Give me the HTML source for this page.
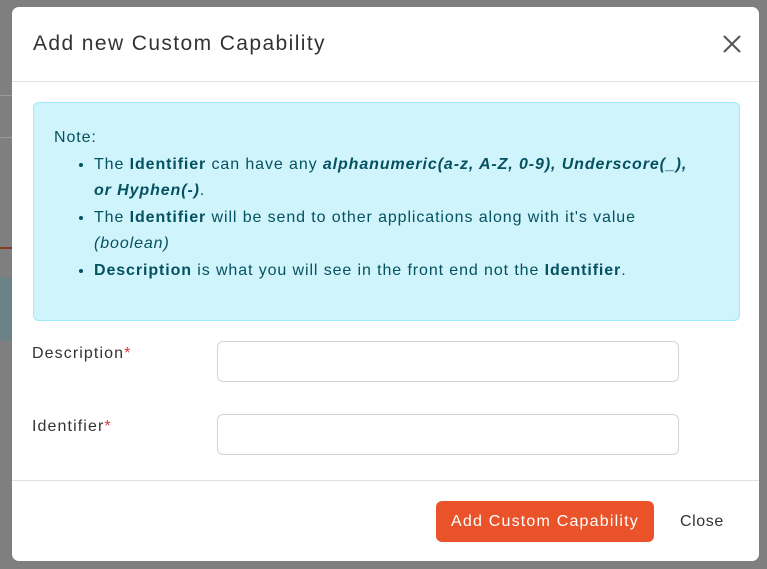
<!DOCTYPE html>
<html><head><style>
body{margin:0;width:767px;height:569px;background:#7f7f7f;font-family:"Liberation Sans",sans-serif;position:relative;overflow:hidden}
.m{position:absolute;left:12px;top:7px;width:747px;height:554px;background:#fff;border-radius:7px;color:#212529}
.t{position:absolute;left:21px;top:25px;font-size:21px;color:#333;letter-spacing:1.4px}
.x{position:absolute;left:710px;top:27px}
.hr{position:absolute;left:0;width:747px;height:1px;background:#dee2e6}
.al{position:absolute;left:21px;top:95px;width:707px;height:219px;background:#cff4fc;border:1px solid #9eeaf9;border-radius:6px;color:#055160;font-size:16px;letter-spacing:0.9px;line-height:26.6px;box-sizing:border-box;padding:22px 20px}
.al ul{margin:0;padding-left:40px}
.lb{position:absolute;left:20px;font-size:16px;color:#333;letter-spacing:1.1px}
.lb span{color:#dc3545}
.in{position:absolute;left:205px;width:462px;height:41px;border:1px solid #ced4da;border-radius:6px;box-sizing:border-box}
.btn{position:absolute;left:424px;top:494px;width:218px;height:41px;background:#ea5329;border-radius:6px;color:#fff;font-size:16px;letter-spacing:1.2px;text-align:center;line-height:41px}
.cl{position:absolute;left:668px;top:506px;font-size:16px;color:#333;letter-spacing:0.6px}
</style></head><body>
<div style="position:absolute;left:0;top:95px;width:12px;height:1px;background:#999"></div>
<div style="position:absolute;left:0;top:137px;width:12px;height:1px;background:#999"></div>
<div style="position:absolute;left:0;top:247px;width:12px;height:2px;background:#8a3a22"></div>
<div style="position:absolute;left:0;top:277px;width:12px;height:64px;background:#6a8288"></div>
<div class="m">
<div class="t">Add new Custom Capability</div>
<svg class="x" width="20" height="20" viewBox="0 0 20 20"><path d="M2 2L18 18M18 2L2 18" stroke="#555" stroke-width="2"/></svg>
<div class="hr" style="top:74px"></div>
<div class="al">Note:
<ul>
<li>The <b>Identifier</b> can have any <b><i>alphanumeric(a-z, A-Z, 0-9), Underscore(_),<br>or Hyphen(-)</i></b>.</li>
<li>The <b>Identifier</b> will be send to other applications along with it's value<br><i>(boolean)</i></li>
<li><b>Description</b> is what you will see in the front end not the <b>Identifier</b>.</li>
</ul></div>
<div class="lb" style="top:338px">Description<span>*</span></div>
<div class="in" style="top:334px"></div>
<div class="lb" style="top:411px">Identifier<span>*</span></div>
<div class="in" style="top:407px"></div>
<div class="hr" style="top:473px"></div>
<div class="btn">Add Custom Capability</div>
<div class="cl">Close</div>
</div>
</body></html>
